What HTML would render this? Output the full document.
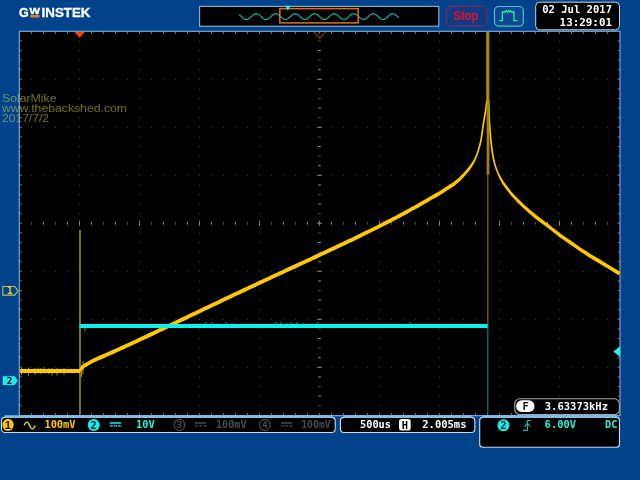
<!DOCTYPE html>
<html lang="en"><head><meta charset="utf-8"><title>GW Instek scope capture</title>
<style>html,body{margin:0;padding:0;background:#00438b;overflow:hidden}svg{display:block}.m{font-family:"DejaVu Sans Mono","Liberation Mono",monospace;font-weight:bold}.s{font-family:"Liberation Sans",sans-serif}</style></head><body>
<svg width="640" height="480" viewBox="0 0 640 480">
<defs><filter id="soft" x="-5%" y="-5%" width="110%" height="110%"><feGaussianBlur stdDeviation="0.45"/></filter></defs>
<rect width="640" height="480" fill="#00438b"/>
<g filter="url(#soft)">
<rect x="19.3" y="31.3" width="600.7" height="384.4" fill="#000" stroke="#7fb0e0" stroke-width="1.1"/>
<path d="M79.0 40.9h1M79.0 50.5h1M79.0 60.1h1M79.0 69.7h1M79.0 79.3h1M79.0 88.9h1M79.0 98.5h1M79.0 108.1h1M79.0 117.7h1M79.0 127.3h1M79.0 136.9h1M79.0 146.5h1M79.0 156.1h1M79.0 165.7h1M79.0 175.3h1M79.0 184.9h1M79.0 194.5h1M79.0 204.1h1M79.0 213.7h1M79.0 223.3h1M79.0 232.9h1M79.0 242.5h1M79.0 252.1h1M79.0 261.7h1M79.0 271.3h1M79.0 280.9h1M79.0 290.5h1M79.0 300.1h1M79.0 309.7h1M79.0 319.3h1M79.0 328.9h1M79.0 338.5h1M79.0 348.1h1M79.0 357.7h1M79.0 367.3h1M79.0 376.9h1M79.0 386.5h1M79.0 396.1h1M79.0 405.7h1M139.0 40.9h1M139.0 50.5h1M139.0 60.1h1M139.0 69.7h1M139.0 79.3h1M139.0 88.9h1M139.0 98.5h1M139.0 108.1h1M139.0 117.7h1M139.0 127.3h1M139.0 136.9h1M139.0 146.5h1M139.0 156.1h1M139.0 165.7h1M139.0 175.3h1M139.0 184.9h1M139.0 194.5h1M139.0 204.1h1M139.0 213.7h1M139.0 223.3h1M139.0 232.9h1M139.0 242.5h1M139.0 252.1h1M139.0 261.7h1M139.0 271.3h1M139.0 280.9h1M139.0 290.5h1M139.0 300.1h1M139.0 309.7h1M139.0 319.3h1M139.0 328.9h1M139.0 338.5h1M139.0 348.1h1M139.0 357.7h1M139.0 367.3h1M139.0 376.9h1M139.0 386.5h1M139.0 396.1h1M139.0 405.7h1M199.0 40.9h1M199.0 50.5h1M199.0 60.1h1M199.0 69.7h1M199.0 79.3h1M199.0 88.9h1M199.0 98.5h1M199.0 108.1h1M199.0 117.7h1M199.0 127.3h1M199.0 136.9h1M199.0 146.5h1M199.0 156.1h1M199.0 165.7h1M199.0 175.3h1M199.0 184.9h1M199.0 194.5h1M199.0 204.1h1M199.0 213.7h1M199.0 223.3h1M199.0 232.9h1M199.0 242.5h1M199.0 252.1h1M199.0 261.7h1M199.0 271.3h1M199.0 280.9h1M199.0 290.5h1M199.0 300.1h1M199.0 309.7h1M199.0 319.3h1M199.0 328.9h1M199.0 338.5h1M199.0 348.1h1M199.0 357.7h1M199.0 367.3h1M199.0 376.9h1M199.0 386.5h1M199.0 396.1h1M199.0 405.7h1M259.0 40.9h1M259.0 50.5h1M259.0 60.1h1M259.0 69.7h1M259.0 79.3h1M259.0 88.9h1M259.0 98.5h1M259.0 108.1h1M259.0 117.7h1M259.0 127.3h1M259.0 136.9h1M259.0 146.5h1M259.0 156.1h1M259.0 165.7h1M259.0 175.3h1M259.0 184.9h1M259.0 194.5h1M259.0 204.1h1M259.0 213.7h1M259.0 223.3h1M259.0 232.9h1M259.0 242.5h1M259.0 252.1h1M259.0 261.7h1M259.0 271.3h1M259.0 280.9h1M259.0 290.5h1M259.0 300.1h1M259.0 309.7h1M259.0 319.3h1M259.0 328.9h1M259.0 338.5h1M259.0 348.1h1M259.0 357.7h1M259.0 367.3h1M259.0 376.9h1M259.0 386.5h1M259.0 396.1h1M259.0 405.7h1M379.0 40.9h1M379.0 50.5h1M379.0 60.1h1M379.0 69.7h1M379.0 79.3h1M379.0 88.9h1M379.0 98.5h1M379.0 108.1h1M379.0 117.7h1M379.0 127.3h1M379.0 136.9h1M379.0 146.5h1M379.0 156.1h1M379.0 165.7h1M379.0 175.3h1M379.0 184.9h1M379.0 194.5h1M379.0 204.1h1M379.0 213.7h1M379.0 223.3h1M379.0 232.9h1M379.0 242.5h1M379.0 252.1h1M379.0 261.7h1M379.0 271.3h1M379.0 280.9h1M379.0 290.5h1M379.0 300.1h1M379.0 309.7h1M379.0 319.3h1M379.0 328.9h1M379.0 338.5h1M379.0 348.1h1M379.0 357.7h1M379.0 367.3h1M379.0 376.9h1M379.0 386.5h1M379.0 396.1h1M379.0 405.7h1M439.0 40.9h1M439.0 50.5h1M439.0 60.1h1M439.0 69.7h1M439.0 79.3h1M439.0 88.9h1M439.0 98.5h1M439.0 108.1h1M439.0 117.7h1M439.0 127.3h1M439.0 136.9h1M439.0 146.5h1M439.0 156.1h1M439.0 165.7h1M439.0 175.3h1M439.0 184.9h1M439.0 194.5h1M439.0 204.1h1M439.0 213.7h1M439.0 223.3h1M439.0 232.9h1M439.0 242.5h1M439.0 252.1h1M439.0 261.7h1M439.0 271.3h1M439.0 280.9h1M439.0 290.5h1M439.0 300.1h1M439.0 309.7h1M439.0 319.3h1M439.0 328.9h1M439.0 338.5h1M439.0 348.1h1M439.0 357.7h1M439.0 367.3h1M439.0 376.9h1M439.0 386.5h1M439.0 396.1h1M439.0 405.7h1M499.0 40.9h1M499.0 50.5h1M499.0 60.1h1M499.0 69.7h1M499.0 79.3h1M499.0 88.9h1M499.0 98.5h1M499.0 108.1h1M499.0 117.7h1M499.0 127.3h1M499.0 136.9h1M499.0 146.5h1M499.0 156.1h1M499.0 165.7h1M499.0 175.3h1M499.0 184.9h1M499.0 194.5h1M499.0 204.1h1M499.0 213.7h1M499.0 223.3h1M499.0 232.9h1M499.0 242.5h1M499.0 252.1h1M499.0 261.7h1M499.0 271.3h1M499.0 280.9h1M499.0 290.5h1M499.0 300.1h1M499.0 309.7h1M499.0 319.3h1M499.0 328.9h1M499.0 338.5h1M499.0 348.1h1M499.0 357.7h1M499.0 367.3h1M499.0 376.9h1M499.0 386.5h1M499.0 396.1h1M499.0 405.7h1M559.0 40.9h1M559.0 50.5h1M559.0 60.1h1M559.0 69.7h1M559.0 79.3h1M559.0 88.9h1M559.0 98.5h1M559.0 108.1h1M559.0 117.7h1M559.0 127.3h1M559.0 136.9h1M559.0 146.5h1M559.0 156.1h1M559.0 165.7h1M559.0 175.3h1M559.0 184.9h1M559.0 194.5h1M559.0 204.1h1M559.0 213.7h1M559.0 223.3h1M559.0 232.9h1M559.0 242.5h1M559.0 252.1h1M559.0 261.7h1M559.0 271.3h1M559.0 280.9h1M559.0 290.5h1M559.0 300.1h1M559.0 309.7h1M559.0 319.3h1M559.0 328.9h1M559.0 338.5h1M559.0 348.1h1M559.0 357.7h1M559.0 367.3h1M559.0 376.9h1M559.0 386.5h1M559.0 396.1h1M559.0 405.7h1M31.0 79.3h1M43.0 79.3h1M55.0 79.3h1M67.0 79.3h1M79.0 79.3h1M91.0 79.3h1M103.0 79.3h1M115.0 79.3h1M127.0 79.3h1M139.0 79.3h1M151.0 79.3h1M163.0 79.3h1M175.0 79.3h1M187.0 79.3h1M199.0 79.3h1M211.0 79.3h1M223.0 79.3h1M235.0 79.3h1M247.0 79.3h1M259.0 79.3h1M271.0 79.3h1M283.0 79.3h1M295.0 79.3h1M307.0 79.3h1M319.0 79.3h1M331.0 79.3h1M343.0 79.3h1M355.0 79.3h1M367.0 79.3h1M379.0 79.3h1M391.0 79.3h1M403.0 79.3h1M415.0 79.3h1M427.0 79.3h1M439.0 79.3h1M451.0 79.3h1M463.0 79.3h1M475.0 79.3h1M487.0 79.3h1M499.0 79.3h1M511.0 79.3h1M523.0 79.3h1M535.0 79.3h1M547.0 79.3h1M559.0 79.3h1M571.0 79.3h1M583.0 79.3h1M595.0 79.3h1M607.0 79.3h1M31.0 127.3h1M43.0 127.3h1M55.0 127.3h1M67.0 127.3h1M79.0 127.3h1M91.0 127.3h1M103.0 127.3h1M115.0 127.3h1M127.0 127.3h1M139.0 127.3h1M151.0 127.3h1M163.0 127.3h1M175.0 127.3h1M187.0 127.3h1M199.0 127.3h1M211.0 127.3h1M223.0 127.3h1M235.0 127.3h1M247.0 127.3h1M259.0 127.3h1M271.0 127.3h1M283.0 127.3h1M295.0 127.3h1M307.0 127.3h1M319.0 127.3h1M331.0 127.3h1M343.0 127.3h1M355.0 127.3h1M367.0 127.3h1M379.0 127.3h1M391.0 127.3h1M403.0 127.3h1M415.0 127.3h1M427.0 127.3h1M439.0 127.3h1M451.0 127.3h1M463.0 127.3h1M475.0 127.3h1M487.0 127.3h1M499.0 127.3h1M511.0 127.3h1M523.0 127.3h1M535.0 127.3h1M547.0 127.3h1M559.0 127.3h1M571.0 127.3h1M583.0 127.3h1M595.0 127.3h1M607.0 127.3h1M31.0 175.3h1M43.0 175.3h1M55.0 175.3h1M67.0 175.3h1M79.0 175.3h1M91.0 175.3h1M103.0 175.3h1M115.0 175.3h1M127.0 175.3h1M139.0 175.3h1M151.0 175.3h1M163.0 175.3h1M175.0 175.3h1M187.0 175.3h1M199.0 175.3h1M211.0 175.3h1M223.0 175.3h1M235.0 175.3h1M247.0 175.3h1M259.0 175.3h1M271.0 175.3h1M283.0 175.3h1M295.0 175.3h1M307.0 175.3h1M319.0 175.3h1M331.0 175.3h1M343.0 175.3h1M355.0 175.3h1M367.0 175.3h1M379.0 175.3h1M391.0 175.3h1M403.0 175.3h1M415.0 175.3h1M427.0 175.3h1M439.0 175.3h1M451.0 175.3h1M463.0 175.3h1M475.0 175.3h1M487.0 175.3h1M499.0 175.3h1M511.0 175.3h1M523.0 175.3h1M535.0 175.3h1M547.0 175.3h1M559.0 175.3h1M571.0 175.3h1M583.0 175.3h1M595.0 175.3h1M607.0 175.3h1M31.0 271.3h1M43.0 271.3h1M55.0 271.3h1M67.0 271.3h1M79.0 271.3h1M91.0 271.3h1M103.0 271.3h1M115.0 271.3h1M127.0 271.3h1M139.0 271.3h1M151.0 271.3h1M163.0 271.3h1M175.0 271.3h1M187.0 271.3h1M199.0 271.3h1M211.0 271.3h1M223.0 271.3h1M235.0 271.3h1M247.0 271.3h1M259.0 271.3h1M271.0 271.3h1M283.0 271.3h1M295.0 271.3h1M307.0 271.3h1M319.0 271.3h1M331.0 271.3h1M343.0 271.3h1M355.0 271.3h1M367.0 271.3h1M379.0 271.3h1M391.0 271.3h1M403.0 271.3h1M415.0 271.3h1M427.0 271.3h1M439.0 271.3h1M451.0 271.3h1M463.0 271.3h1M475.0 271.3h1M487.0 271.3h1M499.0 271.3h1M511.0 271.3h1M523.0 271.3h1M535.0 271.3h1M547.0 271.3h1M559.0 271.3h1M571.0 271.3h1M583.0 271.3h1M595.0 271.3h1M607.0 271.3h1M31.0 319.3h1M43.0 319.3h1M55.0 319.3h1M67.0 319.3h1M79.0 319.3h1M91.0 319.3h1M103.0 319.3h1M115.0 319.3h1M127.0 319.3h1M139.0 319.3h1M151.0 319.3h1M163.0 319.3h1M175.0 319.3h1M187.0 319.3h1M199.0 319.3h1M211.0 319.3h1M223.0 319.3h1M235.0 319.3h1M247.0 319.3h1M259.0 319.3h1M271.0 319.3h1M283.0 319.3h1M295.0 319.3h1M307.0 319.3h1M319.0 319.3h1M331.0 319.3h1M343.0 319.3h1M355.0 319.3h1M367.0 319.3h1M379.0 319.3h1M391.0 319.3h1M403.0 319.3h1M415.0 319.3h1M427.0 319.3h1M439.0 319.3h1M451.0 319.3h1M463.0 319.3h1M475.0 319.3h1M487.0 319.3h1M499.0 319.3h1M511.0 319.3h1M523.0 319.3h1M535.0 319.3h1M547.0 319.3h1M559.0 319.3h1M571.0 319.3h1M583.0 319.3h1M595.0 319.3h1M607.0 319.3h1M31.0 367.3h1M43.0 367.3h1M55.0 367.3h1M67.0 367.3h1M79.0 367.3h1M91.0 367.3h1M103.0 367.3h1M115.0 367.3h1M127.0 367.3h1M139.0 367.3h1M151.0 367.3h1M163.0 367.3h1M175.0 367.3h1M187.0 367.3h1M199.0 367.3h1M211.0 367.3h1M223.0 367.3h1M235.0 367.3h1M247.0 367.3h1M259.0 367.3h1M271.0 367.3h1M283.0 367.3h1M295.0 367.3h1M307.0 367.3h1M319.0 367.3h1M331.0 367.3h1M343.0 367.3h1M355.0 367.3h1M367.0 367.3h1M379.0 367.3h1M391.0 367.3h1M403.0 367.3h1M415.0 367.3h1M427.0 367.3h1M439.0 367.3h1M451.0 367.3h1M463.0 367.3h1M475.0 367.3h1M487.0 367.3h1M499.0 367.3h1M511.0 367.3h1M523.0 367.3h1M535.0 367.3h1M547.0 367.3h1M559.0 367.3h1M571.0 367.3h1M583.0 367.3h1M595.0 367.3h1M607.0 367.3h1" stroke="#4c4c4c" stroke-width="1" fill="none"/>
<path d="M318.0 50.5h3M318.0 69.7h3M317.0 79.3h5M318.0 88.9h3M318.0 108.1h3M317.0 127.3h5M318.0 146.5h3M318.0 165.7h3M317.0 175.3h5M318.0 184.9h3M318.0 204.1h3M317.0 223.3h5M318.0 242.5h3M318.0 261.7h3M317.0 271.3h5M318.0 280.9h3M318.0 300.1h3M317.0 319.3h5M318.0 338.5h3M318.0 357.7h3M317.0 367.3h5M318.0 376.9h3M318.0 396.1h3M43.5 221.8v3M67.5 221.8v3M79.5 220.8v5M91.5 221.8v3M115.5 221.8v3M139.5 220.8v5M163.5 221.8v3M187.5 221.8v3M199.5 220.8v5M211.5 221.8v3M235.5 221.8v3M259.5 220.8v5M283.5 221.8v3M307.5 221.8v3M319.5 220.8v5M331.5 221.8v3M355.5 221.8v3M379.5 220.8v5M403.5 221.8v3M427.5 221.8v3M439.5 220.8v5M451.5 221.8v3M475.5 221.8v3M499.5 220.8v5M523.5 221.8v3M547.5 221.8v3M559.5 220.8v5M571.5 221.8v3M595.5 221.8v3" stroke="#848484" stroke-width="1" fill="none"/>
<path d="M318.0 40.9h3M318.0 60.1h3M318.0 98.5h3M318.0 117.7h3M318.0 136.9h3M318.0 156.1h3M318.0 194.5h3M318.0 213.7h3M318.0 232.9h3M318.0 252.1h3M318.0 290.5h3M318.0 309.7h3M318.0 328.9h3M318.0 348.1h3M318.0 386.5h3M318.0 405.7h3M31.5 221.8v3M55.5 221.8v3M103.5 221.8v3M127.5 221.8v3M151.5 221.8v3M175.5 221.8v3M223.5 221.8v3M247.5 221.8v3M271.5 221.8v3M295.5 221.8v3M343.5 221.8v3M367.5 221.8v3M391.5 221.8v3M415.5 221.8v3M463.5 221.8v3M487.5 221.8v3M511.5 221.8v3M535.5 221.8v3M583.5 221.8v3M607.5 221.8v3" stroke="#4c4c4c" stroke-width="1" fill="none"/>
<path d="M31.5 32v2M31.5 415v-2M43.5 32v2M43.5 415v-2M55.5 32v2M55.5 415v-2M67.5 32v2M67.5 415v-2M79.5 32v2M79.5 415v-2M91.5 32v2M91.5 415v-2M103.5 32v2M103.5 415v-2M115.5 32v2M115.5 415v-2M127.5 32v2M127.5 415v-2M139.5 32v2M139.5 415v-2M151.5 32v2M151.5 415v-2M163.5 32v2M163.5 415v-2M175.5 32v2M175.5 415v-2M187.5 32v2M187.5 415v-2M199.5 32v2M199.5 415v-2M211.5 32v2M211.5 415v-2M223.5 32v2M223.5 415v-2M235.5 32v2M235.5 415v-2M247.5 32v2M247.5 415v-2M259.5 32v2M259.5 415v-2M271.5 32v2M271.5 415v-2M283.5 32v2M283.5 415v-2M295.5 32v2M295.5 415v-2M307.5 32v2M307.5 415v-2M319.5 32v2M319.5 415v-2M331.5 32v2M331.5 415v-2M343.5 32v2M343.5 415v-2M355.5 32v2M355.5 415v-2M367.5 32v2M367.5 415v-2M379.5 32v2M379.5 415v-2M391.5 32v2M391.5 415v-2M403.5 32v2M403.5 415v-2M415.5 32v2M415.5 415v-2M427.5 32v2M427.5 415v-2M439.5 32v2M439.5 415v-2M451.5 32v2M451.5 415v-2M463.5 32v2M463.5 415v-2M475.5 32v2M475.5 415v-2M487.5 32v2M487.5 415v-2M499.5 32v2M499.5 415v-2M511.5 32v2M511.5 415v-2M523.5 32v2M523.5 415v-2M535.5 32v2M535.5 415v-2M547.5 32v2M547.5 415v-2M559.5 32v2M559.5 415v-2M571.5 32v2M571.5 415v-2M583.5 32v2M583.5 415v-2M595.5 32v2M595.5 415v-2M607.5 32v2M607.5 415v-2M20 40.9h2M619.5 40.9h-2M20 50.5h2M619.5 50.5h-2M20 60.1h2M619.5 60.1h-2M20 69.7h2M619.5 69.7h-2M20 79.3h2M619.5 79.3h-2M20 88.9h2M619.5 88.9h-2M20 98.5h2M619.5 98.5h-2M20 108.1h2M619.5 108.1h-2M20 117.7h2M619.5 117.7h-2M20 127.3h2M619.5 127.3h-2M20 136.9h2M619.5 136.9h-2M20 146.5h2M619.5 146.5h-2M20 156.1h2M619.5 156.1h-2M20 165.7h2M619.5 165.7h-2M20 175.3h2M619.5 175.3h-2M20 184.9h2M619.5 184.9h-2M20 194.5h2M619.5 194.5h-2M20 204.1h2M619.5 204.1h-2M20 213.7h2M619.5 213.7h-2M20 223.3h2M619.5 223.3h-2M20 232.9h2M619.5 232.9h-2M20 242.5h2M619.5 242.5h-2M20 252.1h2M619.5 252.1h-2M20 261.7h2M619.5 261.7h-2M20 271.3h2M619.5 271.3h-2M20 280.9h2M619.5 280.9h-2M20 290.5h2M619.5 290.5h-2M20 300.1h2M619.5 300.1h-2M20 309.7h2M619.5 309.7h-2M20 319.3h2M619.5 319.3h-2M20 328.9h2M619.5 328.9h-2M20 338.5h2M619.5 338.5h-2M20 348.1h2M619.5 348.1h-2M20 357.7h2M619.5 357.7h-2M20 367.3h2M619.5 367.3h-2M20 376.9h2M619.5 376.9h-2M20 386.5h2M619.5 386.5h-2M20 396.1h2M619.5 396.1h-2M20 405.7h2M619.5 405.7h-2" stroke="#c0d0e0" stroke-width="1" fill="none" opacity="0.55"/>
<path d="M80 230V414.5" stroke="#8c8a1c" stroke-width="1.7" fill="none"/>
<path d="M487.8 32V326" stroke="#806000" stroke-width="1.3" fill="none"/>
<path d="M487.8 326V414.5" stroke="#009098" stroke-width="1.1" fill="none"/>
<path d="M20 369.1H80V373.1H20Z" fill="#ffc800"/>
<path d="M79 373.1L79 369.1L82.6 364.8L84.6 368Z" fill="#ffc800"/>
<polygon points="82.65,364.72 84.48,363.62 87.11,362.03 90.13,360.24 93.14,358.57 96.08,357.14 99.13,355.81 102.19,354.54 105.21,353.26 108.20,351.94 111.20,350.61 114.19,349.26 117.19,347.91 120.19,346.55 123.19,345.18 126.18,343.81 129.18,342.43 132.18,341.04 135.18,339.65 138.18,338.25 141.17,336.85 144.17,335.44 147.17,334.03 150.17,332.61 153.17,331.19 156.17,329.77 159.17,328.35 162.17,326.92 165.16,325.49 168.16,324.06 171.16,322.63 174.16,321.20 177.16,319.77 180.16,318.33 183.16,316.90 186.16,315.46 189.16,314.02 192.16,312.59 195.16,311.16 198.16,309.72 201.16,308.29 204.16,306.85 207.16,305.42 210.17,303.99 213.17,302.56 216.17,301.14 219.17,299.71 222.17,298.28 225.17,296.86 228.17,295.44 231.17,294.02 234.17,292.60 237.17,291.19 240.17,289.77 243.17,288.36 246.17,286.95 249.17,285.54 252.17,284.13 255.17,282.73 258.18,281.33 261.18,279.92 264.18,278.52 267.18,277.13 270.18,275.73 273.18,274.33 276.18,272.94 279.18,271.55 282.18,270.15 285.18,268.76 288.18,267.37 291.18,265.98 294.18,264.59 297.18,263.20 300.18,261.81 303.18,260.42 306.18,259.03 309.18,257.63 312.18,256.24 315.18,254.85 318.18,253.45 321.18,252.05 324.17,250.65 327.17,249.25 330.17,247.84 333.17,246.43 336.17,245.02 339.17,243.60 342.17,242.18 345.16,240.76 348.16,239.32 351.16,237.89 354.16,236.45 357.16,235.00 360.15,233.54 363.15,232.08 366.15,230.61 369.14,229.13 372.14,227.64 375.14,226.15 378.13,224.64 381.13,223.13 384.13,221.60 387.12,220.06 390.12,218.51 393.12,216.95 396.11,215.38 399.11,213.79 402.10,212.19 405.10,210.57 408.09,208.94 411.09,207.29 414.08,205.63 417.08,203.95 420.12,202.21 423.19,200.43 426.21,198.66 429.08,197.00 431.76,195.48 434.29,194.09 436.71,192.77 439.04,191.43 441.35,190.01 443.61,188.53 445.77,187.06 447.76,185.70 449.52,184.55 451.06,183.60 452.49,182.73 453.96,181.75 455.50,180.58 457.06,179.29 458.61,177.90 460.18,176.43 461.77,174.85 463.38,173.16 464.96,171.43 466.45,169.73 467.82,168.08 469.13,166.46 470.37,164.83 471.54,163.17 472.64,161.44 473.66,159.66 474.61,157.83 475.46,155.93 476.23,153.94 476.93,151.89 477.58,149.81 478.18,147.76 478.74,145.83 479.24,143.98 479.71,142.04 480.16,139.84 480.61,137.28 481.03,134.46 481.44,131.52 481.86,128.63 482.29,125.75 482.72,122.84 483.15,120.01 483.56,117.36 483.96,114.99 484.36,112.82 484.73,110.74 485.06,108.63 485.36,106.26 485.65,103.74 485.89,101.48 486.05,99.91 487.75,100.09 487.58,101.66 487.34,103.92 487.05,106.46 486.74,108.87 486.40,111.02 486.03,113.12 485.64,115.28 485.24,117.64 484.83,120.27 484.40,123.09 483.97,126.00 483.54,128.87 483.12,131.76 482.71,134.70 482.29,137.55 481.84,140.16 481.37,142.41 480.89,144.40 480.38,146.29 479.82,148.24 479.20,150.31 478.54,152.42 477.82,154.52 477.04,156.57 476.22,158.56 475.37,160.51 474.46,162.44 473.46,164.33 472.37,166.18 471.18,167.97 469.91,169.72 468.55,171.47 467.09,173.27 465.52,175.10 463.92,176.89 462.32,178.57 460.76,180.15 459.19,181.66 457.62,183.10 456.04,184.45 454.50,185.65 453.00,186.67 451.46,187.63 449.74,188.70 447.77,190.01 445.61,191.48 443.32,193.03 440.96,194.57 438.56,196.01 436.11,197.39 433.58,198.77 430.92,200.25 428.07,201.88 425.06,203.64 421.98,205.44 418.92,207.20 415.92,208.90 412.91,210.58 409.91,212.24 406.90,213.89 403.90,215.52 400.89,217.14 397.89,218.74 394.88,220.32 391.88,221.90 388.88,223.46 385.87,225.01 382.87,226.54 379.87,228.07 376.86,229.58 373.86,231.09 370.86,232.58 367.85,234.07 364.85,235.55 361.85,237.02 358.84,238.48 355.84,239.93 352.84,241.38 349.84,242.82 346.84,244.26 343.83,245.69 340.83,247.11 337.83,248.53 334.83,249.95 331.83,251.36 328.83,252.77 325.83,254.18 322.82,255.58 319.82,256.98 316.82,258.38 313.82,259.78 310.82,261.17 307.82,262.56 304.82,263.96 301.82,265.35 298.82,266.74 295.82,268.13 292.82,269.52 289.82,270.91 286.82,272.30 283.82,273.69 280.82,275.08 277.82,276.48 274.82,277.87 271.82,279.26 268.82,280.66 265.82,282.06 262.82,283.45 259.82,284.86 256.83,286.26 253.83,287.66 250.83,289.07 247.83,290.47 244.83,291.88 241.83,293.29 238.83,294.70 235.83,296.12 232.83,297.53 229.83,298.95 226.83,300.37 223.83,301.79 220.83,303.22 217.83,304.64 214.83,306.07 211.83,307.50 208.84,308.93 205.84,310.36 202.84,311.79 199.84,313.22 196.84,314.66 193.84,316.09 190.84,317.52 187.84,318.96 184.84,320.39 181.84,321.83 178.84,323.27 175.84,324.70 172.84,326.13 169.84,327.57 166.84,329.00 163.83,330.43 160.83,331.86 157.83,333.28 154.83,334.71 151.83,336.13 148.83,337.55 145.83,338.96 142.83,340.37 139.82,341.78 136.82,343.18 133.82,344.58 130.82,345.97 127.82,347.36 124.81,348.74 121.81,350.11 118.81,351.48 115.81,352.84 112.80,354.19 109.80,355.53 106.79,356.87 103.73,358.19 100.67,359.46 97.69,360.72 94.86,362.00 91.96,363.51 88.99,365.21 86.38,366.78 84.55,367.88" fill="#ffc800"/>
<polygon points="489.45,99.97 489.58,103.85 489.77,109.44 490.00,115.54 490.25,120.96 490.52,125.51 490.82,129.80 491.13,133.78 491.45,137.42 491.75,140.60 492.05,143.35 492.38,145.95 492.74,148.63 493.15,151.50 493.59,154.40 494.07,157.21 494.58,159.82 495.13,162.18 495.72,164.35 496.36,166.42 497.05,168.47 497.80,170.48 498.60,172.44 499.51,174.33 500.46,176.17 501.48,177.98 502.55,179.75 503.64,181.47 504.74,183.10 505.84,184.59 506.94,186.00 508.05,187.39 509.14,188.79 510.20,190.13 511.23,191.40 512.33,192.68 513.57,194.06 515.00,195.64 516.58,197.33 518.22,199.03 519.82,200.62 521.39,202.09 522.95,203.51 524.51,204.91 526.07,206.31 527.63,207.71 529.19,209.08 530.75,210.43 532.31,211.75 533.87,213.04 535.43,214.31 536.99,215.55 538.54,216.76 540.10,217.94 541.66,219.09 543.22,220.25 544.78,221.42 546.26,222.52 547.67,223.58 549.21,224.74 551.04,226.16 553.22,227.89 555.66,229.83 558.28,231.86 561.03,233.90 563.96,235.98 567.10,238.14 570.32,240.35 573.51,242.55 576.63,244.74 579.76,246.92 582.87,249.05 585.98,251.09 589.09,253.01 592.20,254.88 595.32,256.74 598.45,258.62 601.65,260.57 604.89,262.54 608.04,264.46 610.96,266.23 613.76,267.95 616.49,269.61 618.82,271.03 620.46,272.03 618.54,275.17 616.91,274.17 614.57,272.74 611.85,271.08 609.04,269.37 606.13,267.60 602.98,265.68 599.74,263.71 596.55,261.78 593.43,259.91 590.30,258.04 587.16,256.13 584.02,254.11 580.88,252.00 577.74,249.82 574.62,247.62 571.49,245.45 568.31,243.27 565.09,241.06 561.94,238.85 558.97,236.70 556.20,234.56 553.56,232.47 551.13,230.53 548.96,228.84 547.14,227.47 545.61,226.34 544.19,225.28 542.72,224.18 541.16,223.02 539.59,221.86 538.03,220.67 536.46,219.44 534.89,218.17 533.32,216.89 531.76,215.58 530.19,214.25 528.62,212.89 527.06,211.50 525.49,210.10 523.93,208.69 522.37,207.28 520.80,205.84 519.24,204.35 517.68,202.78 516.07,201.09 514.44,199.32 512.86,197.57 511.43,195.94 510.21,194.46 509.13,193.10 508.11,191.77 507.06,190.41 505.96,189.01 504.87,187.57 503.81,186.04 502.76,184.40 501.72,182.67 500.68,180.85 499.67,178.96 498.74,177.03 497.86,175.09 497.04,173.11 496.22,171.10 495.45,169.03 494.74,166.95 494.09,164.82 493.49,162.59 492.92,160.18 492.39,157.52 491.91,154.67 491.47,151.74 491.06,148.87 490.69,146.17 490.37,143.55 490.06,140.77 489.75,137.58 489.44,133.92 489.12,129.92 488.82,125.62 488.55,121.04 488.30,115.61 488.08,109.50 487.88,103.91 487.75,100.03" fill="#ffc800"/>
<path d="M488 32V174.5" stroke="#a48008" stroke-width="2.8" fill="none"/>
<path d="M487.1 32V104" stroke="#c89c10" stroke-width="1.1" fill="none"/>
<path d="M79.5 326H487.6" stroke="#10f0f0" stroke-width="4" fill="none"/>
<path d="M206 322v2M212 322v2M219 323v1M226 322v2M233 323v1M276 322v2M281 322v2M286 323v1M291 322v2M297 322v2M303 323v1M318 322v2M410 322v2M85 328v3" stroke="#10f0f0" stroke-width="1" fill="none" opacity="0.8"/>
<path d="M21.5 368v7M28.5 367.5v8M35 368v7M38 367.5v6M41 368v6M44 367.5v6M49 368v6M52 368v7.5M57 368v7.5M64 368v7M83 361v13M81.5 365v12" stroke="#ffc800" stroke-width="1" opacity="0.7"/>
</g>
<g filter="url(#soft)">
<path d="M74.4 32H85L79.7 37.8Z" fill="#ff3c08"/>
<path d="M314 32L319.7 38.3L325.4 32" fill="none" stroke="#a03828" stroke-width="1.1"/>
<path d="M620 346.4L613.3 351.6L620 356.9Z" fill="#30e8e0"/>
<path d="M2.8 286.5H14.8L18 290.8L14.8 295.1H2.8Z" fill="none" stroke="#c4bc58" stroke-width="1.1"/>
<text x="9.8" y="294.2" class="m" font-size="9.6" fill="#e8d820" text-anchor="middle">1</text>
<path d="M2.8 376.2H14.7L17.9 380.4L14.7 385H2.8Z" fill="#20e8e8"/>
<text x="9.6" y="384" class="m" font-size="9.4" fill="#002020" text-anchor="middle">2</text>
<g class="s" font-size="11" fill="#dcdc48" opacity="0.5"><text x="2" y="102" textLength="54.5" lengthAdjust="spacingAndGlyphs">SolarMike</text><text x="2" y="111.7" textLength="125" lengthAdjust="spacingAndGlyphs">www.thebackshed.com</text><text x="2" y="121.5" textLength="47" lengthAdjust="spacingAndGlyphs">2017/7/2</text></g>
<g class="s" font-weight="bold" font-size="13.2" fill="#fff" stroke="#fff" stroke-width="0.35"><text x="19.1" y="17.2" textLength="9.7" lengthAdjust="spacingAndGlyphs">G</text><text x="29.6" y="14.1" font-size="8.8" textLength="10.5" lengthAdjust="spacingAndGlyphs">W</text><text x="41.6" y="17.2" textLength="48.8" lengthAdjust="spacingAndGlyphs">INSTEK</text></g>
<rect x="30.1" y="15" width="9.4" height="2.5" fill="#e87820"/>
<rect x="199.6" y="6.4" width="239.2" height="19.8" fill="#000" stroke="#98b0cc" stroke-width="1.1"/>
<polyline points="239.0,14.46 240.0,15.19 241.0,16.07 242.0,17.00 243.0,17.89 244.0,18.64 245.0,19.19 246.0,19.47 247.0,19.45 248.0,19.15 249.0,18.57 250.0,17.80 251.0,16.90 252.0,15.97 253.0,15.11 254.0,14.40 255.0,13.91 256.0,13.71 257.0,13.80 258.0,14.17 259.0,14.80 260.0,15.62 261.0,16.53 262.0,17.45 263.0,18.29 264.0,18.95 265.0,19.37 266.0,19.50 267.0,19.34 268.0,18.89 269.0,18.21 270.0,17.36 271.0,16.44 272.0,15.53 273.0,14.73 274.0,14.12 275.0,13.77 276.0,13.71 277.0,13.95 278.0,14.46 279.0,15.19 280.0,16.07 281.0,17.00 282.0,17.89 283.0,18.64 284.0,19.19 285.0,19.47 286.0,19.45 287.0,19.15 288.0,18.57 289.0,17.80 290.0,16.90 291.0,15.97 292.0,15.11 293.0,14.40 294.0,13.91 295.0,13.71 296.0,13.80 297.0,14.17 298.0,14.80 299.0,15.62 300.0,16.53 301.0,17.45 302.0,18.29 303.0,18.95 304.0,19.37 305.0,19.50 306.0,19.34 307.0,18.89 308.0,18.21 309.0,17.36 310.0,16.44 311.0,15.53 312.0,14.73 313.0,14.12 314.0,13.77 315.0,13.71 316.0,13.95 317.0,14.46 318.0,15.19 319.0,16.07 320.0,17.00 321.0,17.89 322.0,18.64 323.0,19.19 324.0,19.47 325.0,19.45 326.0,19.15 327.0,18.57 328.0,17.80 329.0,16.90 330.0,15.97 331.0,15.11 332.0,14.40 333.0,13.91 334.0,13.71 335.0,13.80 336.0,14.17 337.0,14.80 338.0,15.62 339.0,16.53 340.0,17.45 341.0,18.29 342.0,18.95 343.0,19.37 344.0,19.50 345.0,19.34 346.0,18.89 347.0,18.21 348.0,17.36 349.0,16.44 350.0,15.53 351.0,14.73 352.0,14.12 353.0,13.77 354.0,13.71 355.0,13.95 356.0,14.46 357.0,15.19 358.0,16.07 359.0,17.00 360.0,17.89 361.0,18.64 362.0,19.19 363.0,19.47 364.0,19.45 365.0,19.15 366.0,18.57 367.0,17.80 368.0,16.90 369.0,15.97 370.0,15.11 371.0,14.40 372.0,13.91 373.0,13.71 374.0,13.80 375.0,14.17 376.0,14.80 377.0,15.62 378.0,16.53 379.0,17.45 380.0,18.29 381.0,18.95 382.0,19.37 383.0,19.50 384.0,19.34 385.0,18.89 386.0,18.21 387.0,17.36 388.0,16.44 389.0,15.53 390.0,14.73 391.0,14.12 392.0,13.77 393.0,13.71 394.0,13.95 395.0,14.46 396.0,15.19 397.0,16.07 398.0,17.00 399.0,17.89" fill="none" stroke="#1cac9c" stroke-width="1.2"/>
<rect x="279.8" y="8.6" width="78.4" height="14.3" fill="none" stroke="#e07010" stroke-width="1.5"/>
<path d="M285.2 5.8H290.4L287.8 10.8Z" fill="#30e8f0"/>
<rect x="446.6" y="6.4" width="40.2" height="19.4" rx="4" fill="#0c3a84" stroke="#802858" stroke-width="1.2"/>
<text x="453.5" y="19.6" class="s" font-weight="bold" font-size="13" fill="#d01838" stroke="#d01838" stroke-width="0.3" textLength="25" lengthAdjust="spacingAndGlyphs">Stop</text>
<rect x="494.5" y="6.5" width="28.8" height="19.6" rx="4" fill="#084890" stroke="#50c0d4" stroke-width="1.2"/>
<path d="M499.3 20.6H502.4V12H505l1.1 -1.2 1.1 1.2 1.1 -1.2 1.1 1.2 1.1 -1.2 1.1 1.2H514V20.6H517.5" fill="none" stroke="#30e8a8" stroke-width="1.3"/>
<rect x="535.7" y="2.2" width="83.8" height="27.6" rx="4" fill="#000" stroke="#c8d4e0" stroke-width="1"/>
<text x="542.2" y="12.8" class="m" font-size="10.5" fill="#fff" textLength="69.8" lengthAdjust="spacingAndGlyphs">02 Jul 2017</text>
<text x="559.6" y="25.8" class="m" font-size="10.5" fill="#fff" textLength="52.4" lengthAdjust="spacingAndGlyphs">13:29:01</text>
<rect x="1.5" y="417.4" width="333.7" height="15.1" rx="3.5" fill="#000" stroke="#c8dcf0" stroke-width="1.1"/>
<ellipse cx="8" cy="424.9" rx="5.6" ry="6.2" fill="#ffc800"/>
<text x="7.9" y="429.3" class="s" font-weight="bold" font-size="11.5" fill="#201800" text-anchor="middle">1</text>
<path d="M24 425.5q2.8 -6.8 5.6 0t5.6 0" fill="none" stroke="#f4dc30" stroke-width="1.3"/>
<text x="44.4" y="428" class="m" font-size="10.4" fill="#ffc800" textLength="31.2" lengthAdjust="spacingAndGlyphs">100mV</text>
<ellipse cx="93.75" cy="425" rx="6" ry="6.1" fill="#10f0f0"/>
<text x="93.75" y="428.7" class="m" font-size="10.4" fill="#001818" text-anchor="middle">2</text>
<path d="M109.8 423h11.2M109.8 425.9h3M113.9 425.9h3M118 425.9h3" stroke="#10f0f0" stroke-width="1.4"/>
<text x="136" y="428" class="m" font-size="10.4" fill="#28f0dc" textLength="18.75" lengthAdjust="spacingAndGlyphs">10V</text>
<ellipse cx="179.4" cy="425" rx="5.3" ry="5.6" fill="none" stroke="#4c4c4c" stroke-width="1.2"/>
<text x="179.4" y="428.4" class="m" font-size="9.4" fill="#4c4c4c" text-anchor="middle">3</text>
<path d="M195 423h11.2M195 425.9h3M199.1 425.9h3M203.2 425.9h3" stroke="#4c4c4c" stroke-width="1.4"/>
<text x="216" y="428" class="m" font-size="10.4" fill="#4c4c4c" textLength="30.5" lengthAdjust="spacingAndGlyphs">100mV</text>
<ellipse cx="264.75" cy="425" rx="5.3" ry="5.6" fill="none" stroke="#4c4c4c" stroke-width="1.2"/>
<text x="264.75" y="428.4" class="m" font-size="9.4" fill="#4c4c4c" text-anchor="middle">4</text>
<path d="M281 423h11.2M281 425.9h3M285.1 425.9h3M289.2 425.9h3" stroke="#4c4c4c" stroke-width="1.4"/>
<text x="301.2" y="428" class="m" font-size="10.4" fill="#4c4c4c" textLength="29.6" lengthAdjust="spacingAndGlyphs">100mV</text>
<rect x="340.4" y="417.4" width="134.4" height="15.1" rx="3.5" fill="#000" stroke="#c8dcf0" stroke-width="1.1"/>
<text x="360" y="427.9" class="m" font-size="10.4" fill="#fff" textLength="31" lengthAdjust="spacingAndGlyphs">500us</text>
<rect x="399" y="419" width="11.7" height="11.6" rx="2.5" fill="#fff"/>
<text x="404.9" y="428.7" class="m" font-size="10.4" fill="#000" text-anchor="middle">H</text>
<text x="422.3" y="427.9" class="m" font-size="10.4" fill="#fff" textLength="44.2" lengthAdjust="spacingAndGlyphs">2.005ms</text>
<rect x="479.7" y="417.4" width="139.8" height="29.9" rx="3" fill="#000" stroke="#c8dcf0" stroke-width="1.1"/>
<ellipse cx="503.5" cy="425.3" rx="6" ry="6" fill="#10f0f0"/>
<text x="503.5" y="429" class="m" font-size="10.4" fill="#001818" text-anchor="middle">2</text>
<path d="M523 430.4h4.4v-9.9h3.6M524.6 426.6l2.8-3.4 2.8 3.4" fill="none" stroke="#20b8b8" stroke-width="1.1"/>
<text x="544.6" y="427.9" class="m" font-size="10.4" fill="#28f0dc" textLength="31.6" lengthAdjust="spacingAndGlyphs">6.00V</text>
<text x="605" y="427.9" class="m" font-size="10.4" fill="#28f0dc" textLength="12.5" lengthAdjust="spacingAndGlyphs">DC</text>
<rect x="514.8" y="398.8" width="104.6" height="15.8" rx="5" fill="#000" stroke="#a8a8a8" stroke-width="1.1"/>
<rect x="516.2" y="400.3" width="18.3" height="11.6" rx="5.5" fill="#fff"/>
<text x="525.6" y="409.9" class="m" font-size="10.4" fill="#000" text-anchor="middle">F</text>
<text x="544.8" y="409.6" class="m" font-size="10.4" fill="#fff" textLength="63.2" lengthAdjust="spacingAndGlyphs">3.63373kHz</text>
<path d="M4.5 416.7H332.5M343.5 416.7H471.5M482.5 416.7H617" stroke="#80bce6" stroke-width="2.7" fill="none"/>
</g>
</svg></body></html>
